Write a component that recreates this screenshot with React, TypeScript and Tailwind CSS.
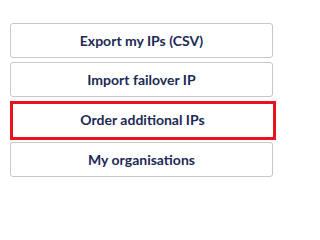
import React from 'react';

const btn =
  'flex items-center justify-center w-[263px] h-[35px] rounded-[3px] border border-[#c8c8c8] bg-white text-[14px] font-bold text-[#1c2a55] leading-none';

export default function App() {
  return (
    <div className="w-[289px] h-[209px] bg-white pt-[23px] pl-[10px] font-['Lato','Open_Sans',sans-serif]">
      <button className={btn}>Export my IPs (CSV)</button>
      <button className={`${btn} mt-[4px]`}>Import failover IP</button>
      {/* highlighted action with red annotation frame */}
      <div className="relative mt-[4px] w-[266px] h-[39px]">
        <button className={`${btn} ml-[1px] w-[262px] h-[38px]`}>Order additional IPs</button>
        <div className="absolute inset-0 border-[3px] border-[#e8131f] pointer-events-none" />
      </div>
      <button className={`${btn} mt-[2px]`}>My organisations</button>
    </div>
  );
}
